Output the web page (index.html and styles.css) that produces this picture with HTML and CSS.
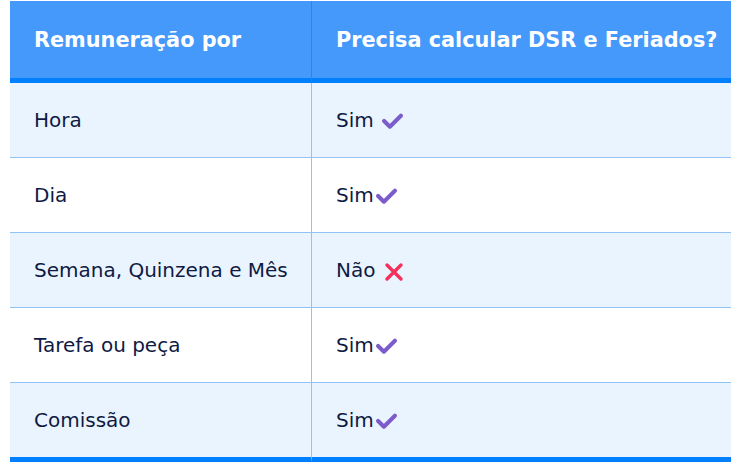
FILE: index.html
```html
<!DOCTYPE html>
<html lang="pt-BR">
<head>
<meta charset="utf-8">
<link rel="stylesheet" href="styles.css">
</head>
<body>
<table class="tbl">
  <thead>
    <tr>
      <th class="c1">Remuneração por</th>
      <th class="c2">Precisa calcular DSR e Feriados?</th>
    </tr>
  </thead>
  <tbody>
    <tr class="odd">
      <td class="c1">Hora</td>
      <td class="c2">Sim <svg class="ico check" viewBox="0 0 20 16"><path d="M2 7.5 L7.5 13 L18 2.5" /></svg></td>
    </tr>
    <tr>
      <td class="c1">Dia</td>
      <td class="c2">Sim<svg class="ico check" viewBox="0 0 20 16"><path d="M2 7.5 L7.5 13 L18 2.5" /></svg></td>
    </tr>
    <tr class="odd">
      <td class="c1">Semana, Quinzena e Mês</td>
      <td class="c2">Não <svg class="ico cross" viewBox="0 0 20 20"><path d="M3 3 L17 17 M17 3 L3 17" /></svg></td>
    </tr>
    <tr>
      <td class="c1">Tarefa ou peça</td>
      <td class="c2">Sim<svg class="ico check" viewBox="0 0 20 16"><path d="M2 7.5 L7.5 13 L18 2.5" /></svg></td>
    </tr>
    <tr class="odd last">
      <td class="c1">Comissão</td>
      <td class="c2">Sim<svg class="ico check" viewBox="0 0 20 16"><path d="M2 7.5 L7.5 13 L18 2.5" /></svg></td>
    </tr>
  </tbody>
</table>
</body>
</html>
```
FILE: styles.css
```css
html, body {
  margin: 0;
  padding: 0;
  background: #ffffff;
}
body {
  padding: 1px 0 0 10px;
  font-family: "DejaVu Sans", "Noto Sans", sans-serif;
}
.tbl {
  border-collapse: separate;
  border-spacing: 0;
  width: 730px;
  table-layout: fixed;
}
.tbl th {
  background: #4499fb;
  color: #ffffff;
  font-weight: bold;
  font-size: 20.8px;
  text-align: left;
  height: 82px;
  padding: 0 0 0 24px;
  border-bottom: 5px solid #0080ff;
  box-sizing: border-box;
  white-space: nowrap;
}
.tbl th.c1 {
  width: 302px;
  border-right: 1px solid #2a86ee;
}
.tbl td {
  font-size: 20px;
  color: #0f1a44;
  height: 75px;
  padding: 0 0 0 24px;
  border-bottom: 1px solid #91c4f5;
  box-sizing: border-box;
  vertical-align: middle;
  white-space: nowrap;
}
.tbl td.c1 {
  border-right: 1px solid #91c4f5;
}
.tbl tr.odd td {
  background: #eaf4fe;
}
.tbl tr.last td {
  border-bottom: 5px solid #0080ff;
  height: 79px;
}
.ico {
  display: inline-block;
  vertical-align: middle;
  fill: none;
  stroke-linecap: round;
  stroke-linejoin: round;
}
.check {
  width: 21px;
  height: 17px;
  margin-left: 2px;
  stroke: #7c5ccb;
  stroke-width: 3.8;
}
.cross {
  width: 20px;
  height: 20px;
  margin-left: 2px;
  stroke: #f2325a;
  stroke-width: 3.4;
}
```
